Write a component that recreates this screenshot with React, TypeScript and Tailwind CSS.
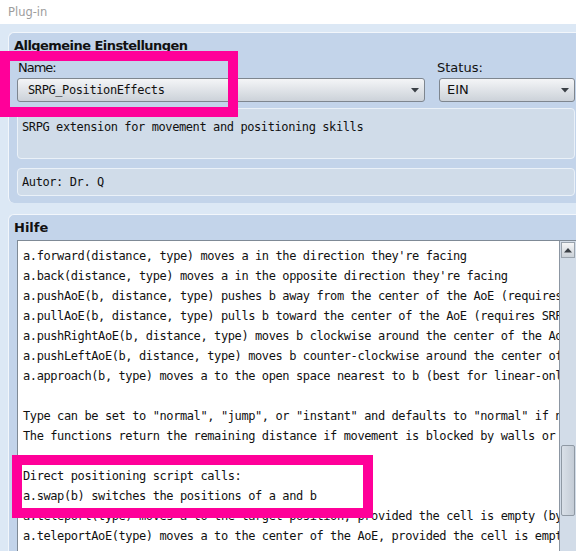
import React from "react";

const helpLines = [
  "a.forward(distance, type) moves a in the direction they're facing",
  "a.back(distance, type) moves a in the opposite direction they're facing",
  "a.pushAoE(b, distance, type) pushes b away from the center of the AoE (requires SRPG_AoE)",
  "a.pullAoE(b, distance, type) pulls b toward the center of the AoE (requires SRPG_AoE)",
  "a.pushRightAoE(b, distance, type) moves b clockwise around the center of the AoE",
  "a.pushLeftAoE(b, distance, type) moves b counter-clockwise around the center of the AoE",
  "a.approach(b, type) moves a to the open space nearest to b (best for linear-only movement)",
  "",
  'Type can be set to "normal", "jump", or "instant" and defaults to "normal" if not specified',
  "The functions return the remaining distance if movement is blocked by walls or units",
  "",
  "Direct positioning script calls:",
  "a.swap(b) switches the positions of a and b",
  "a.teleport(type) moves a to the target position, provided the cell is empty (bypasses walls)",
  "a.teleportAoE(type) moves a to the center of the AoE, provided the cell is empty",
];

const mono = "font-['DejaVu_Sans_Mono',monospace] text-[12px] tracking-[-0.4px]";

const Arrow = () => (
  <svg width="8" height="5" viewBox="0 0 8 5" className="shrink-0">
    <path d="M0 0 H8 L4 4.5 Z" fill="#3a3f45" />
  </svg>
);

const Combo = ({ value, isMono, className }: { value: string; isMono?: boolean; className?: string }) => (
  <div
    className={`flex h-[24px] items-center justify-between rounded-[3px] border border-[#7e868f] bg-gradient-to-b from-[#f4f5f7] to-[#ccd2d9] pr-[5px] text-[13px] text-[#111] ${className ?? ""}`}
  >
    <span className={isMono ? mono : ""}>{value}</span>
    <Arrow />
  </div>
);

export default function App() {
  return (
    <div className="relative h-[551px] w-[576px] overflow-hidden bg-[#dce8f5] font-['DejaVu_Sans',sans-serif]">
      <div className="h-[24px] bg-white pl-[8px] text-[11.5px] leading-[24px] text-[#9d9d9d]">Plug-in</div>

      <div className="pl-[8px] pt-[8px]">
        {/* general settings */}
        <section className="h-[171px] rounded-l-[6px] border-l border-t border-[#f2f6fb] bg-[#c3d4ea] pt-[5px] pr-[1px]">
          <h2 className="pl-[5px] text-[13px] font-bold leading-[16px] tracking-[-0.55px] text-[#111]">
            Allgemeine Einstellungen
          </h2>
          <div className="mt-[6px] flex pl-[8px]">
            <div className="w-[408px]">
              <div className="pl-[1px] text-[13px] leading-[16px] tracking-[-1px] text-[#111]">Name:</div>
              <Combo value="SRPG_PositionEffects" isMono className="mt-[2px] pl-[10px]" />
            </div>
            <div className="ml-[14px] flex-1">
              <div className="-ml-[2px] text-[13px] leading-[16px] text-[#111]">Status:</div>
              <Combo value="EIN" className="mt-[2px] pl-[7px]" />
            </div>
          </div>
          <div className={`ml-[8px] mt-[6px] h-[51px] rounded-[4px] border border-[#eaf1f8] bg-[#d0dce9] pl-[4px] pt-[8px] leading-[20px] text-[#111] ${mono}`}>
            SRPG extension for movement and positioning skills
          </div>
          <div className={`ml-[8px] mt-[9px] h-[28px] rounded-[4px] border border-[#eaf1f8] bg-[#d0dce9] pl-[4px] pt-[3px] leading-[20px] text-[#111] ${mono}`}>
            Autor: Dr. Q
          </div>
        </section>

        {/* help */}
        <section className="mt-[11px] h-[340px] rounded-tl-[6px] border-l border-t border-[#f2f6fb] bg-[#c3d4ea] pt-[5px]">
          <h2 className="pl-[5px] text-[13px] font-bold leading-[16px] text-[#111]">Hilfe</h2>
          <div className="ml-[8px] mt-[4px] flex h-[320px] border-l border-t border-[#7f8a96] bg-white">
            <div className={`flex-1 overflow-hidden pl-[5px] pt-[5px] leading-[20px] text-[#111] ${mono}`}>
              {helpLines.map((line, i) => (
                <div key={i} className="h-[20px] whitespace-pre">
                  {line}
                </div>
              ))}
            </div>
            <div className="w-[17px] shrink-0 border-l border-[#8c96a2] bg-[#d2dce8]">
              <div className="mx-[1px] mt-[1px] flex h-[16px] items-center justify-center border border-[#9aa3ad] bg-gradient-to-b from-[#f5f6f7] to-[#cbd1d8]">
                <svg width="8" height="5" viewBox="0 0 8 5">
                  <path d="M0 4.5 H8 L4 0 Z" fill="#3a3f45" />
                </svg>
              </div>
              <div className="mx-[1px] mt-[187px] h-[71px] rounded-[2px] border border-[#8f99a4] bg-gradient-to-r from-[#d9e0e8] to-[#c4ccd6]" />
            </div>
          </div>
        </section>
      </div>

      {/* highlight frames */}
      <div className="absolute left-0 top-[51px] h-[66px] w-[238px] border-[10px] border-[#ff0099]" />
      <div className="absolute left-[12px] top-[455px] h-[63px] w-[361px] border-[10px] border-[#ff0099]" />
    </div>
  );
}
